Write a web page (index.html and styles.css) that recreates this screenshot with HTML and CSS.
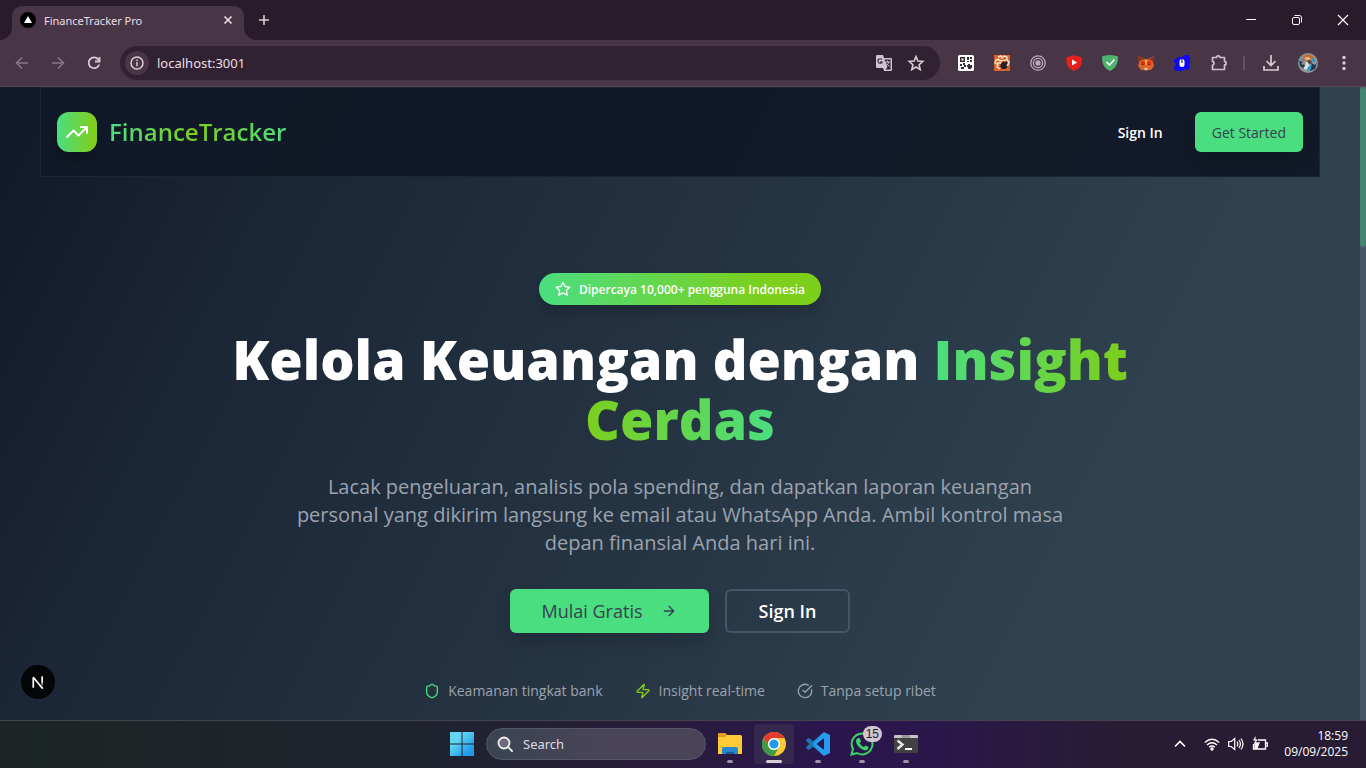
FILE: index.html
```html
<!DOCTYPE html>
<html lang="id">
<head>
    <meta charset="UTF-8">
    <meta name="viewport" content="width=device-width, initial-scale=1.0">
    <title>FinanceTracker Pro</title>
    <link rel="stylesheet" href="styles.css">
</head>
<body>
    <!-- Browser tabs -->
    <div class="tab-bar">
        <div class="tab">
            <svg width="16" height="16" viewBox="0 0 16 16"><circle cx="8" cy="8" r="8" fill="#000"/><path d="M8 4l4 7H4z" fill="#fff"/></svg>
            <span class="tab-title">FinanceTracker Pro</span>
            <button class="icon-btn" aria-label="Close tab">
                <svg width="16" height="16" viewBox="0 0 16 16" fill="none" stroke="#e8dfe6" stroke-width="1.600"><path d="M4.500 4.500l7 7M11.500 4.500l-7 7"/></svg>
            </button>
        </div>
        <button class="icon-btn new-tab" aria-label="New tab">
            <svg width="16" height="16" viewBox="0 0 16 16" fill="none" stroke="#d8ccd6" stroke-width="1.600"><path d="M8 3v10M3 8h10"/></svg>
        </button>
        <div class="window-buttons">
            <button class="icon-btn" aria-label="Minimize">
                <svg width="16" height="16" viewBox="0 0 16 16" fill="none" stroke="#fff"><path d="M3 7.500h10"/></svg>
            </button>
            <button class="icon-btn" aria-label="Restore">
                <svg width="16" height="16" viewBox="0 0 16 16" fill="none" stroke="#fff"><rect x="3.500" y="5.500" width="7" height="7" rx="1.500"/><path d="M5.500 3.500h5a2 2 0 0 1 2 2v5"/></svg>
            </button>
            <button class="icon-btn" aria-label="Close">
                <svg width="16" height="16" viewBox="0 0 16 16" fill="none" stroke="#fff" stroke-width="1.200"><path d="M3 3l10 10M13 3L3 13"/></svg>
            </button>
        </div>
    </div>

    <!-- Browser toolbar -->
    <div class="toolbar">
        <div class="nav-buttons">
            <button class="icon-btn" aria-label="Back">
                <svg width="16" height="16" viewBox="0 0 16 16" fill="none" stroke="#81788a" stroke-width="1.600"><path d="M14 8H3M8 2.500L2.500 8 8 13.500"/></svg>
            </button>
            <button class="icon-btn" aria-label="Forward">
                <svg width="16" height="16" viewBox="0 0 16 16" fill="none" stroke="#81788a" stroke-width="1.600"><path d="M2 8h11M8 2.500L13.500 8 8 13.500"/></svg>
            </button>
            <button class="icon-btn" aria-label="Reload">
                <svg width="16" height="16" viewBox="0 0 16 16" fill="none" stroke="#d8ccd6" stroke-width="1.800"><path d="M13.200 9.500a5.400 5.400 0 1 1-1-5.200L13.500 6"/><path d="M13.500 2v4.500H9"/></svg>
            </button>
        </div>
        <div class="address-bar">
            <button class="icon-btn site-info" aria-label="Site information">
                <svg width="14" height="14" viewBox="0 0 14 14" fill="none" stroke="#d8ccd6" stroke-width="1.500"><circle cx="7" cy="7" r="6"/><path d="M7 6v4.200M7 3.500v1.400"/></svg>
            </button>
            <input class="address" type="text" value="localhost:3001" aria-label="Address">
            <button class="icon-btn" aria-label="Translate">
                <svg width="18" height="18" viewBox="0 0 18 18"><path d="M2 1h6l1 3h7a1 1 0 0 1 1 1v11a1 1 0 0 1-1 1H9l-1-3H2a1 1 0 0 1-1-1V2a1 1 0 0 1 1-1z" fill="#cfc1cf"/><path d="M9.500 5.500h6v10h-5l2-2.500z" fill="#312232"/><path d="M7 5.500A2.300 2.300 0 1 0 7.300 8H5" fill="none" stroke="#312232" stroke-width="1.100"/><path d="M10 8h5M12.500 6.500V8M14 8c-.5 2-2 3-3 3.500M11.500 9.500l3 3" fill="none" stroke="#cfc1cf"/></svg>
            </button>
            <button class="icon-btn" aria-label="Bookmark">
                <svg width="18" height="18" viewBox="0 0 18 18" fill="none" stroke="#d8ccd6" stroke-width="1.600"><path d="M9 2.500l1.900 4.600 4.900.4-3.700 3.200 1.100 4.800L9 13l-4.200 2.500 1.100-4.800-3.700-3.200 4.900-.4z"/></svg>
            </button>
        </div>
        <div class="extensions">
            <svg width="16" height="16" viewBox="0 0 16 16"><rect width="16" height="16" rx="1.500" fill="#fff"/><path d="M2 2h5v5H2zM3.500 3.500v2h2v-2zM9 2h2v3H9zM12 2h2v2h-2zM12 5h2v2h-2zM9 6h2v1H9zM2 9h2v2H2zM5 8h2v2H5zM3 12h3v2H3zM6 10h2v2H6zM10 9h2v1h2v3h-1v1h-3v-2H9v-2h1z" fill="#333" fill-rule="evenodd"/></svg>
            <svg width="16" height="16" viewBox="0 0 16 16"><path fill="#d8622f" d="M0 0h16v16H0z"/><path d="M4 2l3-1 1 2 2-2 3 1v3l2 2-1 3-3 1M5 4L2 5 1 8l3 2-1 2 3 2M4 5l4 1 4-1M3 8h5" fill="none" stroke="#f8e3c0" stroke-width="1.500"/><path d="M8 7l1.500-1 1 1.500L12 6l1.500 2-1 2 1 2-2 2H8l-2-3z" fill="#2a2024"/></svg>
            <svg width="16" height="16" viewBox="0 0 16 16" fill="none" stroke="#b9adb9" stroke-width="1.300"><circle cx="8" cy="8" r="7.200"/><circle cx="8" cy="8" r="4.600"/><circle cx="8" cy="8" r="2" fill="#b9adb9"/></svg>
            <svg width="16" height="16" viewBox="0 0 16 16"><path d="M8 0l2 1 5 1 1 2-1 6-2 3-5 3-5-3-2-3-1-6 1-2 5-1z" fill="#e8201b"/><path d="M6 4.500l5 3-5 3z" fill="#fff"/></svg>
            <svg width="16" height="16" viewBox="0 0 16 16"><path d="M8 0c3 0 6 1 8 1.500 0 7-1.500 11-8 14.500C1.500 12.500 0 8.500 0 1.500 2 1 5 0 8 0z" fill="#50b36c"/><path d="M4.500 7l3 3 5-5.500" fill="none" stroke="#fff" stroke-width="1.500"/></svg>
            <svg width="16" height="16" viewBox="0 0 16 16"><path d="M0 1l6 3h4l6-3-1 6 1 4-3 4h-3l-2 1-2-1H3l-3-4 1-4z" fill="#dd6328"/><path d="M0 1l6 4H3L1 7zM16 1l-6 4h3l2 2z" fill="#882e20"/><path d="M3 6l4 1v3H3zM13 6L9 7v3h4z" fill="#e5281c"/><path d="M7 5h2v5H7z" fill="#f4b52e"/><path d="M6 13h4l-1 2H7z" fill="#d5c9c1"/><path d="M4 9l2 1H4zM12 9l-2 1h2z" fill="#23262d"/></svg>
            <svg width="16" height="16" viewBox="0 0 16 16"><path d="M4 2h4l3-2q5-1 5 3v5l-1 2 1 3q-2 3-5 1l-3 2H3q-3 0-3-4l2-3-2-2V4q2 1 4-2z" fill="#1008f5"/><rect x="5.500" y="4" width="5" height="8" rx="2.500" fill="#fff"/><path d="M8 4v4" stroke="#333" stroke-width="1.200"/></svg>
            <svg width="18" height="18" viewBox="0 0 18 18" fill="none" stroke="#cfc1cf" stroke-width="1.700"><path d="M2.500 3.500h4a1.700 1.700 0 0 1 3.400 0h4.600v4a1.700 1.700 0 0 1 0 3.400v4.600h-12v-4.200a2 2 0 0 0 0-3.900z" stroke-linejoin="round"/></svg>
        </div>
        <span class="divider"></span>
        <div class="profile-tools">
            <button class="icon-btn" aria-label="Downloads">
                <svg width="18" height="18" viewBox="0 0 18 18" fill="none" stroke="#d8ccd6" stroke-width="1.700"><path d="M9 1v10M4.500 7L9 11.500 13.500 7M2 12v4h14v-4"/></svg>
            </button>
            <button class="icon-btn" aria-label="Profile">
                <svg width="20" height="20" viewBox="0 0 20 20"><circle cx="10" cy="10" r="10" fill="#8d9a9c"/><path d="M5 3l4-2 6 2 2 4-3-1-2 2-4-1-4 2z" fill="#c86a35"/><path d="M1 8l4 1-2 2 4 2-1 3-4-3zM13 10l4 2 2-3-2 7-5 2z" fill="#20344e"/><path d="M8 9l3-1-1 3 2 1-4 5-3-2 2-2z" fill="#d9e4e8"/><path d="M14 5l4 3-4 1zM10 14l4-3-1 5-4 3zM2 5l3 1-2 3z" fill="#2a9bc8"/><path d="M6 5l4-1 3 2-4 1z" fill="#f0c090"/><path d="M9 7l5 1-1 3-3-1zM5 11l2 1-2 3z" fill="#5a3c34"/></svg>
            </button>
            <button class="icon-btn" aria-label="Menu">
                <svg width="16" height="16" viewBox="0 0 16 16" fill="#d8ccd6"><circle cx="8" cy="2.500" r="1.700"/><circle cx="8" cy="8" r="1.700"/><circle cx="8" cy="13.500" r="1.700"/></svg>
            </button>
        </div>
    </div>

    <!-- Page -->
    <div class="viewport">
        <div class="page">
            <header class="site-header">
                <a class="logo" href="#">
                    <span class="logo-icon">
                        <svg width="24" height="24" viewBox="0 0 24 24" fill="none" stroke="#fff" stroke-width="2" stroke-linecap="round" stroke-linejoin="round"><path d="M16 7h6v6"/><path d="m22 7-8.500 8.500-5-5L2 17"/></svg>
                    </span>
                    <span class="logo-text">FinanceTracker</span>
                </a>
                <nav class="site-nav">
                    <a class="nav-link" href="#">Sign In</a>
                    <a class="btn btn-small" href="#">Get Started</a>
                </nav>
            </header>

            <main class="hero">
                <div class="badge">
                    <svg width="16" height="16" viewBox="0 0 24 24" fill="none" stroke="#fff" stroke-width="2" stroke-linejoin="round"><path d="M12 2l3.100 6.300 6.900 1-5 4.900 1.200 6.900L12 17.800l-6.200 3.300L7 14.200 2 9.300l6.900-1z"/></svg>
                    <span>Dipercaya 10,000+ pengguna Indonesia</span>
                </div>
                <h1>Kelola Keuangan dengan <span class="gradient-text">Insight Cerdas</span></h1>
                <p class="lead">Lacak pengeluaran, analisis pola spending, dan dapatkan laporan keuangan personal yang dikirim langsung ke email atau WhatsApp Anda. Ambil kontrol masa depan finansial Anda hari ini.</p>
                <div class="actions">
                    <a class="btn btn-large" href="#">
                        Mulai Gratis
                        <svg width="16" height="16" viewBox="0 0 24 24" fill="none" stroke="currentColor" stroke-width="2" stroke-linecap="round" stroke-linejoin="round"><path d="M5 12h14M12 5l7 7-7 7"/></svg>
                    </a>
                    <a class="btn btn-outline" href="#">Sign In</a>
                </div>
                <ul class="features">
                    <li>
                        <svg width="16" height="16" viewBox="0 0 24 24" fill="none" stroke="#4ade80" stroke-width="2" stroke-linecap="round" stroke-linejoin="round"><path d="M20 13c0 5-3.500 7.500-7.660 8.950a1 1 0 0 1-.67-.01C7.500 20.500 4 18 4 13V6a1 1 0 0 1 1-1c2 0 4.500-1.200 6.240-2.720a1.170 1.170 0 0 1 1.520 0C14.510 3.810 17 5 19 5a1 1 0 0 1 1 1z"/></svg>
                        Keamanan tingkat bank
                    </li>
                    <li>
                        <svg width="16" height="16" viewBox="0 0 24 24" fill="none" stroke="#84cc16" stroke-width="2" stroke-linecap="round" stroke-linejoin="round"><path d="M4 14a1 1 0 0 1-.78-1.630l9.900-10.200a.5.5 0 0 1 .86.460l-1.920 6.020A1 1 0 0 0 13 10h7a1 1 0 0 1 .78 1.630l-9.900 10.200a.5.5 0 0 1-.86-.460l1.920-6.020A1 1 0 0 0 11 14z"/></svg>
                        Insight real-time
                    </li>
                    <li>
                        <svg width="16" height="16" viewBox="0 0 24 24" fill="none" stroke="#9ca3af" stroke-width="2" stroke-linecap="round" stroke-linejoin="round"><path d="M21.800 10A10 10 0 1 1 17 3.335"/><path d="m9 11 3 3L22 4"/></svg>
                        Tanpa setup ribet
                    </li>
                </ul>
            </main>

            <button class="dev-badge" aria-label="Dev tools">
                <svg width="34" height="34" viewBox="0 0 36 36">
                    <defs><linearGradient id="fade" x1="0" y1="0" x2="0" y2="1"><stop offset="0.500" stop-color="#fff"/><stop offset="1" stop-color="#fff" stop-opacity="0"/></linearGradient></defs>
                    <path d="M13 24V13l10 12" fill="none" stroke="#fff" stroke-width="1.800" stroke-linejoin="bevel"/>
                    <rect x="21.500" y="12" width="1.800" height="11" fill="url(#fade)"/>
                </svg>
            </button>
        </div>
        <div class="scrollbar"><div class="scroll-thumb"></div></div>
    </div>

    <!-- Taskbar -->
    <footer class="taskbar">
        <div class="taskbar-center">
            <button class="icon-btn start" aria-label="Start">
                <svg width="24" height="24" viewBox="0 0 24 24"><defs><linearGradient id="win" x1="0" y1="0" x2="1" y2="1"><stop offset="0.300" stop-color="#63d6f2"/><stop offset="0.800" stop-color="#209bea"/></linearGradient></defs><path d="M0 0h11.500v11.500H0zM12.500 0H24v11.500H12.500zM0 12.500h11.500V24H0zM12.500 12.500H24V24H12.500z" fill="url(#win)"/></svg>
            </button>
            <label class="search">
                <svg width="16" height="16" viewBox="0 0 16 16" fill="#6d6c7c" stroke="#eee" stroke-width="1.800"><circle cx="7" cy="7" r="5.500"/><path d="M11 11l4 4" stroke-linecap="round"/></svg>
                <input type="text" placeholder="Search" aria-label="Search">
            </label>
            <div class="apps">
                <button class="app" aria-label="File Explorer">
                    <svg width="24" height="24" viewBox="0 0 24 24"><path d="M0 2.500Q0 1 1.500 1H7l2 2h13.500Q24 3 24 4.500V22H0z" fill="#fccb35"/><path d="M0 2.500Q0 1 1.500 1H7l2 2-2 2H0z" fill="#e99b1c"/><path d="M4 22v-5q0-2 2-2h12q2 0 2 2v5z" fill="#2688d0"/><path d="M8 22v-2h8v2z" fill="#155f9c"/></svg>
                </button>
                <button class="app active" aria-label="Chrome">
                    <svg width="24" height="24" viewBox="0 0 24 24"><circle cx="12" cy="12" r="12" fill="#fbc934"/><path d="M1.600 6A12 12 0 0 1 22.400 6H12a6 6 0 0 0-5.200 9z" fill="#e33b2e"/><path d="M1.600 6A12 12 0 0 0 12 24l5.200-9A6 6 0 0 1 6.800 15z" fill="#3d9c4a"/><circle cx="12" cy="12" r="6" fill="#fff"/><circle cx="12" cy="12" r="4.600" fill="#209bea"/></svg>
                </button>
                <button class="app" aria-label="VS Code">
                    <svg width="24" height="24" viewBox="0 0 24 24"><path d="M1 7l2-1 15 12v6L0 9z" fill="#1c77b8"/><path d="M1 17l2 1L18 6V0L0 15z" fill="#1c77b8"/><path d="M18 0l6 3v18l-6 3L7 13l2-2 9 7V6l-9 7-2-2z" fill="#259ced"/></svg>
                </button>
                <button class="app" aria-label="WhatsApp">
                    <svg width="24" height="24" viewBox="0 0 24 24"><path d="M1.500 22.500L3 17A10.400 10.400 0 1 1 7 21z" fill="none" stroke="#3cd366" stroke-width="2"/><path d="M8 6l2 .5 1 3-1.500 1.500q1.500 3 4.500 4l1.500-1.500 3 1.500q0 3-3 3.500C11 18 6 13 6 9q0-2 2-3z" fill="#3cd366"/></svg>
                    <span class="count">15</span>
                </button>
                <button class="app" aria-label="Terminal">
                    <svg width="24" height="24" viewBox="0 0 24 24"><rect y="3" width="24" height="18" rx="1" fill="#414141"/><path d="M0 6V4q0-1 1-1h22q1 0 1 1v2z" fill="#cabfcb"/><path d="M8 3h8v3H8z" fill="#999"/><path d="M3.500 8.500l5 4-5 4.500" fill="none" stroke="#e5e5e5" stroke-width="2.400"/><path d="M11 17h7" stroke="#fff" stroke-width="2"/></svg>
                </button>
            </div>
        </div>
        <div class="tray">
            <svg width="16" height="16" viewBox="0 0 16 16" fill="none" stroke="#fff" stroke-width="1.600"><path d="M3 10.500l5-5 5 5"/></svg>
            <div class="tray-icons">
                <svg width="16" height="16" viewBox="0 0 16 16" fill="none" stroke="#fff" stroke-width="1.300"><path d="M.8 6.500q7.200-6.500 14.400 0M3 9q5-4.500 10 0M5.200 11.300q2.800-2.500 5.600 0"/><circle cx="8" cy="13" r="1" fill="#fff"/></svg>
                <svg width="16" height="16" viewBox="0 0 16 16" fill="none" stroke="#fff" stroke-width="1.200"><path d="M.7 5.500h2.500l3.500-3v11l-3.500-3H.7zM9 5.500q1.600 2.500 0 5M11 4q2.800 4 0 8M13 2.500q4 5.500 0 11"/></svg>
                <svg width="16" height="16" viewBox="0 0 16 16" fill="none" stroke="#fff" stroke-width="1.300"><path d="M6 4h7.500v9h-12V8M14 7h1.500v3H14"/><path d="M3 7h4l-2 5H3z" fill="#fff"/><path d="M3.500 0L1 4.500h2.500L2 8l4-4.500H3.500z" fill="#fff" stroke="none"/></svg>
            </div>
            <div class="clock">
                <span>18:59</span>
                <span>09/09/2025</span>
            </div>
        </div>
    </footer>
</body>
</html>
```
FILE: styles.css
```css
* {
    box-sizing: border-box;
}

body {
    margin: 0;
    min-height: 100vh;
    display: flex;
    flex-direction: column;
    font-family: "Open Sans", sans-serif;
    color: #fff;
    background-color: #111827;
}

a {
    color: inherit;
    text-decoration: none;
}

svg {
    display: block;
    flex-shrink: 0;
}

.icon-btn {
    display: flex;
    align-items: center;
    justify-content: center;
    padding: 0;
    border: none;
    background: none;
    cursor: pointer;
}

/* Browser */
.tab-bar {
    display: flex;
    align-items: center;
    height: 40px;
    padding: 0 15px 0 12px;
    background-color: #2a1b2b;
}

.tab {
    position: relative;
    display: flex;
    align-items: center;
    gap: 8px;
    width: 232px;
    height: 34px;
    margin-top: 6px;
    padding: 0 8px 6px;
    border-radius: 10px 10px 0 0;
    background-color: #483647;
}

.tab::before,
.tab::after {
    content: "";
    position: absolute;
    bottom: 0;
    width: 12px;
    height: 12px;
}

.tab::before {
    right: 100%;
    background: radial-gradient(circle at 0 0, transparent 12px, #483647 12px);
}

.tab::after {
    left: 100%;
    background: radial-gradient(circle at 100% 0, transparent 12px, #483647 12px);
}

.tab-title {
    flex: 1;
    font-family: "Noto Sans", sans-serif;
    font-size: 11px;
    color: #e8dfe6;
}

.new-tab {
    margin-left: 12px;
}

.window-buttons {
    display: flex;
    gap: 30px;
    margin-left: auto;
}

.toolbar {
    display: flex;
    align-items: center;
    height: 47px;
    padding: 0 14px;
    background-color: #483647;
    border-bottom: 1px solid #554555;
}

.nav-buttons {
    display: flex;
    gap: 20px;
    margin-right: 18px;
}

.address-bar {
    display: flex;
    align-items: center;
    gap: 14px;
    flex: 1;
    height: 34px;
    padding: 0 15px 0 5px;
    border-radius: 17px;
    background-color: #312232;
}

.site-info {
    width: 24px;
    height: 24px;
    border-radius: 12px;
    background-color: #483647;
}

.address {
    flex: 1;
    min-width: 0;
    margin-left: -6px;
    padding: 0;
    border: none;
    outline: none;
    background: none;
    font-family: "Noto Sans", sans-serif;
    font-size: 13px;
    color: #e8dfe6;
}

.extensions {
    display: flex;
    align-items: center;
    gap: 20px;
    margin-left: 18px;
}

.divider {
    width: 2px;
    height: 14px;
    margin: 0 17px 0 15px;
    background-color: #5f5565;
}

.profile-tools {
    display: flex;
    align-items: center;
    gap: 18px;
}

/* Page */
.viewport {
    display: flex;
    flex: 1;
}

.page {
    position: relative;
    flex: 1;
    background: linear-gradient(117deg, #111827 0%, #1b2636 20%, #263543 52%, #304250 80%, #304250 100%);
}

.scrollbar {
    width: 6px;
    background-color: #475569;
}

.scroll-thumb {
    height: 160px;
    border-radius: 3px;
    background-color: #448470;
}

.site-header {
    display: flex;
    align-items: center;
    justify-content: space-between;
    max-width: 1280px;
    margin: 0 auto;
    padding: 24px 16px;
    border: 1px solid #1b2635;
    background-color: rgba(17, 24, 39, 0.95);
}

.logo {
    display: flex;
    align-items: center;
    gap: 12px;
}

.logo-icon {
    display: flex;
    align-items: center;
    justify-content: center;
    width: 40px;
    height: 40px;
    border-radius: 12px;
    background: linear-gradient(90deg, #4ade80, #84cc16);
    box-shadow: 0 8px 12px rgba(0, 0, 0, 0.2);
}

.logo-text,
.gradient-text {
    background: linear-gradient(90deg, #4ade80, #7ccf1b, #4ade80);
    -webkit-background-clip: text;
    background-clip: text;
    color: transparent;
}

.logo-text {
    font-size: 24px;
    line-height: 32px;
    font-weight: 600;
}

.site-nav {
    display: flex;
    align-items: center;
    gap: 32px;
}

.nav-link {
    font-size: 14px;
    font-weight: 600;
}

.btn {
    display: flex;
    align-items: center;
    border-radius: 6px;
    background-color: #4ade80;
    color: #374151;
    box-shadow: 0 10px 16px rgba(0, 0, 0, 0.15);
}

.btn-small {
    height: 40px;
    padding: 0 17px;
    font-size: 14px;
}

.btn-large,
.btn-outline {
    height: 44px;
    padding: 0 32px;
    font-size: 18px;
}

.btn-large {
    gap: 18px;
}

.btn-outline {
    border: 2px solid #475569;
    background: none;
    box-shadow: none;
    color: #fff;
    font-weight: 600;
}

.hero {
    display: flex;
    flex-direction: column;
    align-items: center;
    padding: 96px 16px 19px;
    text-align: center;
}

.badge {
    display: flex;
    align-items: center;
    gap: 8px;
    height: 32px;
    margin-bottom: 24px;
    padding: 0 16px;
    border-radius: 16px;
    background: linear-gradient(90deg, #4ade80, #7ccf1b 80%);
    box-shadow: 0 8px 12px rgba(0, 0, 0, 0.15);
    font-size: 12px;
    font-weight: 600;
}

.hero h1 {
    max-width: 920px;
    margin: 0 0 24px;
    font-size: 54px;
    line-height: 60px;
    font-weight: 800;
}

.lead {
    max-width: 768px;
    margin: 0 0 32px;
    font-size: 20px;
    line-height: 28px;
    color: #9ca3af;
}

.actions {
    display: flex;
    gap: 16px;
    margin-bottom: 48px;
}

.features {
    display: flex;
    gap: 32px;
    margin: 0;
    padding: 0;
    list-style: none;
    font-size: 14px;
    line-height: 20px;
    color: #9ca3af;
}

.features li {
    display: flex;
    align-items: center;
    gap: 8px;
}

.dev-badge {
    position: absolute;
    left: 21px;
    bottom: 21px;
    width: 34px;
    height: 34px;
    padding: 0;
    border: none;
    border-radius: 17px;
    background-color: #040507;
}

/* Taskbar */
.taskbar {
    display: grid;
    grid-template-columns: 1fr auto 1fr;
    align-items: center;
    height: 48px;
    padding: 0 0 2px 10px;
    border-top: 1px solid #464450;
    background: linear-gradient(90deg, #1c2524 0%, #1e242e 30%, #281c3a 48%, #2a164d 60%, #2a174a 68%, #281c34 82%, #281c34 100%);
}

.taskbar-center {
    grid-column: 2;
    display: flex;
    align-items: center;
}

.start {
    margin-right: 12px;
}

.search {
    display: flex;
    align-items: center;
    gap: 10px;
    width: 220px;
    height: 32px;
    padding: 0 10px;
    border: 1px solid #555667;
    border-radius: 16px;
    background: linear-gradient(90deg, #394451, #494458 50%);
}

.search input {
    width: 100%;
    padding: 0;
    border: none;
    outline: none;
    background: none;
    font-family: "Noto Sans", sans-serif;
    font-size: 13px;
    color: #fff;
}

.search input::placeholder {
    color: #dedbe1;
}

.apps {
    display: flex;
    gap: 4px;
    margin-left: 4px;
}

.app {
    position: relative;
    display: flex;
    align-items: center;
    justify-content: center;
    width: 40px;
    height: 40px;
    padding: 0;
    border: none;
    border-radius: 4px;
    background: none;
}

.app::after {
    content: "";
    position: absolute;
    bottom: 1px;
    width: 6px;
    height: 3px;
    border-radius: 2px;
    background-color: #9a93a4;
}

.app.active {
    background-color: #35284e;
}

.app.active::after {
    width: 16px;
    background-color: #d8ccd6;
}

.count {
    position: absolute;
    top: 2px;
    right: 0;
    padding: 0 3px;
    border-radius: 8px;
    background-color: #d1c5d3;
    color: #222;
    font-size: 12px;
    line-height: 16px;
}

.tray {
    display: flex;
    align-items: center;
    justify-content: flex-end;
    gap: 16px;
    padding-right: 18px;
}

.tray-icons {
    display: flex;
    gap: 8px;
}

.clock {
    display: flex;
    flex-direction: column;
    align-items: flex-end;
    font-size: 12px;
    line-height: 16px;
}
```
